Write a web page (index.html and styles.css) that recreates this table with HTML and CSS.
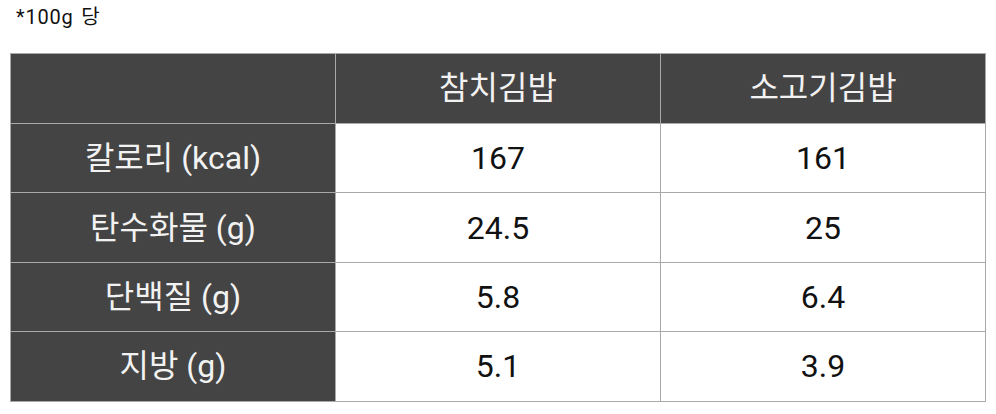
FILE: index.html
```html
<!DOCTYPE html>
<html lang="ko">
<head>
<meta charset="utf-8">
<link rel="stylesheet" href="styles.css">
</head>
<body>
<div class="wrap">
  <p class="note">*100g 당</p>
  <table class="nutri">
    <thead>
      <tr><th></th><th>참치김밥</th><th>소고기김밥</th></tr>
    </thead>
    <tbody>
      <tr><th>칼로리 (kcal)</th><td>167</td><td>161</td></tr>
      <tr><th>탄수화물 (g)</th><td>24.5</td><td>25</td></tr>
      <tr><th>단백질 (g)</th><td>5.8</td><td>6.4</td></tr>
      <tr><th>지방 (g)</th><td>5.1</td><td>3.9</td></tr>
    </tbody>
  </table>
</div>
</body>
</html>
```
FILE: styles.css
```css
html, body {
  margin: 0;
  padding: 0;
  background: #fff;
}
body {
  font-family: Roboto, "Noto Sans CJK KR", sans-serif;
  color: #111;
}
.wrap {
  padding: 0 10px;
}
.note {
  margin: 0;
  padding: 4px 0 0 6px;
  font-size: 20px;
  letter-spacing: 0.8px;
  word-spacing: 2px;
  line-height: 27px;
  height: 45px;
  box-sizing: border-box;
}
.nutri {
  width: 976px;
  margin-top: 7.5px;
  border-collapse: collapse;
  table-layout: fixed;
  font-size: 32px;
}
.nutri th,
.nutri td {
  border: 1px solid #a9a9a9;
  text-align: center;
  font-weight: normal;
  padding: 0;
  height: 68.4px;
  line-height: 40px;
}
.nutri th {
  background: #444;
  color: #f2f2f2;
}
.nutri td {
  background: #fff;
  color: #111;
}
.nutri thead th {
  height: 69.6px;
}
```
